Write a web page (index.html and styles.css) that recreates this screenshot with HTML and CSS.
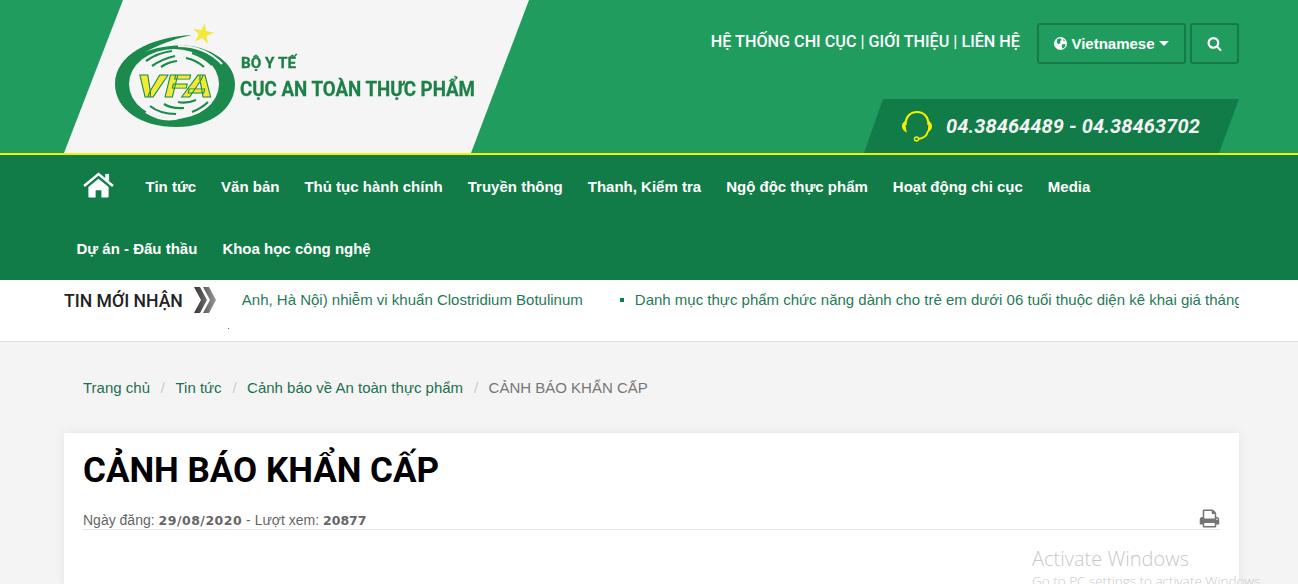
FILE: index.html
```html
<!DOCTYPE html>
<html lang="vi">
<head>
<meta charset="utf-8">
<title>Cảnh báo khẩn cấp</title>
<link rel="stylesheet" href="styles.css">
</head>
<body>
<header class="top">
  <div class="wrap top-inner">
    <a class="logo" href="#">
      <svg class="logo-art" viewBox="0 0 465 153" width="465" height="153" aria-label="VFA logo">
        <g transform="translate(-64 0)">
          <polygon points="204.900,23.200 206,31.100 213.900,32.500 206.700,36 207.800,43.900 202.300,38.100 195.100,41.600 198.800,34.600 193.300,28.800 201.200,30.200" fill="#f4e93a"/>
          <path d="M192 35 C150 37 115 55 115 84 C115 110 142 127 176 127 C212 127 235 108 235 84 C235 66 218 52 196 47 C180 44 160 46 145 52 C165 42 178 38 192 35Z" fill="#1b8a4c"/>
          <ellipse cx="174" cy="84" rx="45" ry="35" fill="#f5f5f5"/>
          <path d="M178 46 Q205 46 222 64" stroke="#f5f5f5" stroke-width="2" fill="none"/>
          <path d="M184 116 Q165 124 146 112" stroke="#f5f5f5" stroke-width="2.500" fill="none"/>
          <path d="M146 61 Q157 53 172 51 M152 66 Q162 59 175 56 M177 61 Q168 62 161 67 M192 53 Q204 57 212 65 M186 58 Q196 60 204 67" stroke="#1b8a4c" stroke-width="2.200" fill="none"/>
          <path d="M150 106 Q160 114 176 114 M164 104 Q172 109 184 108 M178 102 Q186 104 196 100 M192 112 Q202 108 208 102" stroke="#1b8a4c" stroke-width="2.200" fill="none"/>
          <text class="logo-vfa" x="137" y="97" textLength="76" lengthAdjust="spacingAndGlyphs">VFA</text>
          <text class="logo-sub" x="241" y="68" textLength="55" lengthAdjust="spacingAndGlyphs">BỘ Y TẾ</text>
          <text class="logo-name" x="240" y="96" textLength="235" lengthAdjust="spacingAndGlyphs">CỤC AN TOÀN THỰC PHẨM</text>
        </g>
      </svg>
    </a>
    <div class="top-right">
      <div class="top-row">
        <p class="top-links"><a href="#">HỆ THỐNG CHI CỤC</a> | <a href="#">GIỚI THIỆU</a> | <a href="#">LIÊN HỆ</a></p>
        <button class="btn btn-lang">
          <svg class="globe" viewBox="0 0 16 16" width="13" height="13"><circle cx="8" cy="8" r="8" fill="#fff"/><path d="M4 2.500 L8 1.500 L9.500 4 L7.500 5 L8 7.500 L5.500 9 L3.500 6.500Z M10 9 L14 8.500 L13.500 12 L10.500 14.500 L9.500 11.500Z M11 2.500 L13.500 4.500 L12 5.500Z" fill="#219c5f"/></svg>
          Vietnamese
          <span class="caret"></span>
        </button>
        <button class="btn btn-search" aria-label="Tìm kiếm">
          <svg viewBox="0 0 1792 1792" width="15" height="15"><path fill="#fff" d="M1216 832q0-185-131.500-316.500t-316.500-131.500-316.500 131.500-131.500 316.500 131.500 316.500 316.500 131.500 316.500-131.500 131.500-316.500zm512 832q0 52-38 90t-90 38q-54 0-90-38l-343-342q-179 124-399 124-143 0-273.500-55.500t-225-150-150-225-55.500-273.500 55.500-273.500 150-225 225-150 273.500-55.500 273.500 55.500 225 150 150 225 55.500 273.500q0 220-124 399l343 343q37 37 37 90z"/></svg>
        </button>
      </div>
      <div class="hotline">
        <svg class="headset" viewBox="0 0 32 32" width="32" height="32"><path d="M4.500 15 C4.500 7 9 2 16 2 C23 2 27.500 7 27.500 15" fill="none" stroke="#f4f000" stroke-width="2.200"/><path d="M5 10.500 C2 12 0.500 14.500 1 17 C1.500 20 3.500 21.500 6 22.500 C4.500 18.500 4.500 14.500 5 10.500Z M27 10.500 C30 12 31.500 14.500 31 17 C30.500 20 28.500 21.500 26 22.500 C27.500 18.500 27.500 14.500 27 10.500Z" fill="#f4f000"/><path d="M27 21 C26 26 22 28.500 17 29" fill="none" stroke="#f4f000" stroke-width="1.800"/><circle cx="15.500" cy="29" r="2" fill="none" stroke="#f4f000" stroke-width="1.500"/></svg>
        <span class="hotline-num">04.38464489 - 04.38463702</span>
      </div>
    </div>
  </div>
</header>

<nav class="mainnav">
  <ul class="wrap nav-list">
    <li><a href="#" class="nav-home" aria-label="Trang chủ">
      <svg viewBox="0 0 32 27" width="31" height="26"><path fill="#fff" d="M16 7 L5.500 15.500 V25.500 Q5.500 26.500 6.500 26.500 H13 V19 H19 V26.500 H25.500 Q26.500 26.500 26.500 25.500 V15.500Z"/><path fill="none" stroke="#fff" stroke-width="2.600" d="M1 14.500 L16 2.200 L31 14.500"/><rect x="23" y="2" width="4" height="7" fill="#fff"/></svg>
    </a></li>
    <li><a href="#">Tin tức</a></li>
    <li><a href="#">Văn bản</a></li>
    <li><a href="#">Thủ tục hành chính</a></li>
    <li><a href="#">Truyền thông</a></li>
    <li><a href="#">Thanh, Kiểm tra</a></li>
    <li><a href="#">Ngộ độc thực phẩm</a></li>
    <li><a href="#">Hoạt động chi cục</a></li>
    <li><a href="#">Media</a></li>
    <li><a href="#">Dự án - Đấu thầu</a></li>
    <li><a href="#">Khoa học công nghệ</a></li>
  </ul>
</nav>

<section class="ticker">
  <div class="wrap ticker-inner">
    <h2 class="ticker-title">TIN MỚI NHẬN</h2>
    <svg class="ticker-arrows" viewBox="0 0 22 26" width="22" height="26"><defs><linearGradient id="chev" x1="0" x2="1" y1="0" y2="0"><stop offset="0" stop-color="#333"/><stop offset="1" stop-color="#999"/></linearGradient></defs><path fill="url(#chev)" d="M0 0 H6 L13 13 L6 26 H0 L7 13Z M9 0 H15 L22 13 L15 26 H9 L16 13Z"/></svg>
    <div class="ticker-track">
      <span class="ticker-item">Anh, Hà Nội) nhiễm vi khuẩn Clostridium Botulinum</span>
      <span class="ticker-item ticker-bullet">Danh mục thực phẩm chức năng dành cho trẻ em dưới 06 tuổi thuộc diện kê khai giá tháng 8 năm 2020</span>
    </div>
  </div>
</section>

<main class="content">
  <div class="wrap">
    <ol class="crumbs">
      <li><a href="#">Trang chủ</a></li>
      <li><a href="#">Tin tức</a></li>
      <li><a href="#">Cảnh báo về An toàn thực phẩm</a></li>
      <li class="current">CẢNH BÁO KHẨN CẤP</li>
    </ol>
    <article class="card">
      <h1 class="card-title">CẢNH BÁO KHẨN CẤP</h1>
      <div class="meta">
        <span>Ngày đăng: <b class="meta-date">29/08/2020</b> - Lượt xem: <b>20877</b></span>
        <svg class="print" viewBox="0 0 1792 1792" width="21" height="21"><path fill="#757575" d="M448 1536h896v-256h-896v256zm0-640h896v-384h-160q-40 0-68-28t-28-68v-160h-640v640zm1152 64q0-26-19-45t-45-19-45 19-19 45 19 45 45 19 45-19 19-45zm128 0v416q0 13-9.500 22.500t-22.500 9.500h-224v160q0 40-28 68t-68 28h-960q-40 0-68-28t-28-68v-160h-224q-13 0-22.500-9.500t-9.500-22.500v-416q0-79 56.500-135.500t135.500-56.500h64v-544q0-40 28-68t68-28h672q40 0 88 20t76 48l152 152q28 28 48 76t20 88v256h64q79 0 135.500 56.500t56.500 135.500z"/></svg>
      </div>
    </article>
  </div>
</main>

<aside class="watermark">
  <div class="wm-big">Activate Windows</div>
  <div class="wm-small">Go to PC settings to activate Windows.</div>
</aside>
</body>
</html>
```

FILE: styles.css
```css
* { box-sizing: border-box; }
html, body { margin: 0; padding: 0; height: 584px; overflow: hidden; }
body {
  position: relative;
  font-family: "Liberation Sans", Arial, sans-serif;
  font-size: 15px;
  background: #f4f4f4;
  color: #333;
}
a { color: inherit; text-decoration: none; }
.wrap { width: 1175px; margin-left: 64px; }

/* header */
.top { height: 155px; background: #219c5f; border-bottom: 2px solid #f2f200; }
.top-inner { display: flex; justify-content: space-between; height: 153px; }
.logo {
  display: block;
  width: 465px;
  height: 153px;
  background: #f5f5f5;
  clip-path: polygon(59px 0, 465px 0, 407px 153px, 0 153px);
}
.logo-art { display: block; filter: blur(0.4px); }
.logo-vfa {
  font: italic 900 32px "Roboto", sans-serif;
  fill: #f4ea34;
  stroke: #1b8a4c;
  stroke-width: 0.800px;
}
.logo-sub { font: 700 14px "Roboto", sans-serif; fill: #1d8048; stroke: #1d8048; stroke-width: 0.300px; }
.logo-name { font: 700 21px "Roboto", sans-serif; fill: #1d8048; stroke: #1d8048; stroke-width: 0.300px; }

.top-right { display: flex; flex-direction: column; align-items: flex-end; padding-top: 23px; }
.top-row { display: flex; align-items: flex-start; }
.top-links {
  margin: 9px 17px 0 0;
  font: 500 16.200px/20px "Roboto", sans-serif;
  color: #fff;
}
.btn {
  height: 41px;
  background: transparent;
  border: 2px solid #157a48;
  border-radius: 3px;
  color: #fff;
  font: 700 15px "Liberation Sans", sans-serif;
  padding: 0;
  display: flex;
  align-items: center;
  justify-content: center;
}
.btn-lang { width: 149px; gap: 4px; }
.btn-search { width: 49px; margin-left: 4px; }
.caret {
  width: 0;
  height: 0;
  border-left: 5px solid transparent;
  border-right: 5px solid transparent;
  border-top: 5px solid #fff;
}
.hotline {
  margin-top: 35px;
  width: 375px;
  height: 54px;
  background: #127c48;
  clip-path: polygon(19px 0, 375px 0, 355px 54px, 0 54px);
  display: flex;
  align-items: center;
  padding-left: 37px;
  gap: 13px;
}
.hotline-num {
  font: italic 700 20px "Roboto", sans-serif;
  letter-spacing: 0.100px;
  color: #f2f2f2;
}

/* nav */
.mainnav { height: 125px; background: #127c48; }
.nav-list { list-style: none; padding: 0; margin-top: 0; margin-bottom: 0; display: flex; flex-wrap: wrap; }
.nav-list li { height: 62.500px; display: flex; align-items: center; }
.nav-list a {
  display: flex;
  align-items: center;
  padding: 0 12.500px;
  font: 700 15px "Liberation Sans", sans-serif;
  color: #fff;
}
.nav-list .nav-home { padding: 0 19px 0 19px; margin-top: -2px; }

/* ticker */
.ticker { height: 62px; background: #fff; border-bottom: 1px solid #ddd; }
.ticker-inner { position: relative; display: flex; align-items: flex-start; padding-top: 7px; }
.ticker-inner::after { content: ""; position: absolute; left: 164px; top: 48px; width: 1px; height: 1px; background: #666; }
.ticker-title { margin: 4px 0 0; font: 500 17.600px/21px "Roboto", sans-serif; color: #222; white-space: nowrap; }
.ticker-arrows { margin-left: 11px; flex: none; }
.ticker-track {
  flex: 1;
  display: flex;
  gap: 37px;
  margin-left: 26px;
  overflow: hidden;
  white-space: nowrap;
  font-size: 15px;
  line-height: 26px;
  color: #1f7a57;
}
.ticker-item { flex: none; }
.ticker-bullet { display: flex; align-items: center; gap: 11px; }
.ticker-bullet::before { content: ""; width: 4px; height: 4px; background: #127c48; }

/* content */
.crumbs {
  list-style: none;
  margin: 0;
  padding: 36px 19px 0;
  display: flex;
  height: 91px;
  line-height: 20px;
  font-size: 15px;
}
.crumbs a { color: #1f6f4f; }
.crumbs li + li::before { content: "/"; color: #ccc; padding: 0 10.500px 0 10.800px; }
.crumbs .current { color: #777; }
.card {
  height: 151px;
  background: #fff;
  padding: 18px 19px 0;
  box-shadow: 0 0 10px rgba(0, 0, 0, 0.08);
}
.card-title {
  margin: 0;
  font: 700 35px/40px "Roboto", sans-serif;
  color: #000;
}
.meta {
  margin-top: 19px;
  height: 20px;
  display: flex;
  justify-content: space-between;
  align-items: flex-end;
  border-bottom: 1px solid #e5e5e5;
  font-size: 14px;
  line-height: 18px;
  color: #666;
}
.meta b { font: 700 12.500px "DejaVu Sans", sans-serif; }
.meta .meta-date { letter-spacing: 0.500px; }
.print { flex: none; }

/* OS overlay */
.watermark { position: absolute; left: 1032px; top: 546px; color: #c8c8c8; font-family: "Open Sans", sans-serif; font-weight: 300; white-space: nowrap; }
.wm-big { font-size: 20px; line-height: 26px; }
.wm-small { font-size: 13.500px; line-height: 18px; }
```
